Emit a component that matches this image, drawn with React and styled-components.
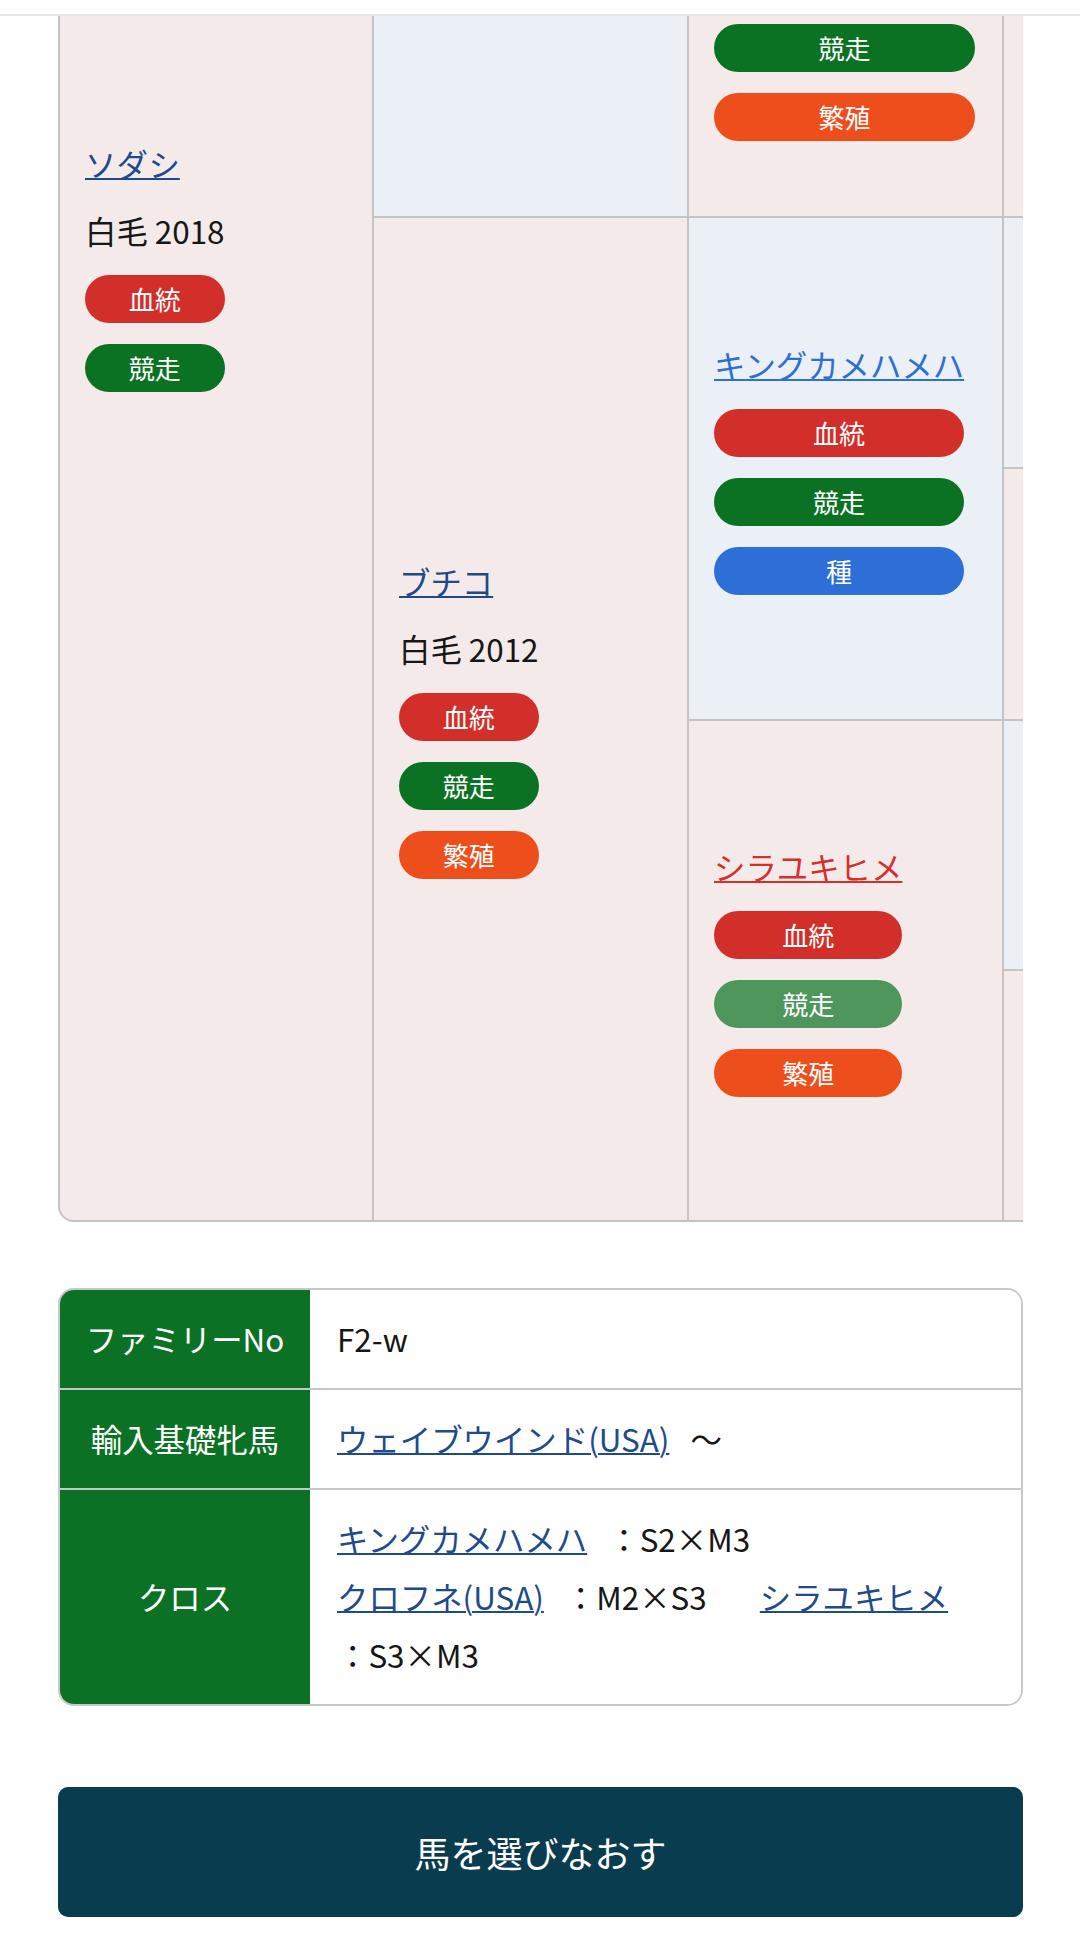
import React from "react";
import styled, { createGlobalStyle } from "styled-components";

const GlobalStyle = createGlobalStyle`
  body {
    margin: 0;
    background: #ffffff;
    font-family: "Noto Sans CJK JP", "Noto Sans", sans-serif;
    color: #161616;
  }
`;

const TONES = {
  sire: "#eaf0f5",
  dam: "#f5eaea",
};

const TAGS = {
  blood: { label: "血統", color: "#d32f2a" },
  race: { label: "競走", color: "#0b7223" },
  raceLight: { label: "競走", color: "#4f965d" },
  breed: { label: "繁殖", color: "#ee4d1c" },
  stud: { label: "種", color: "#2d6fd6" },
};

const NAME_COLORS = {
  normal: "#1d4a8a",
  sire: "#2e6fd2",
  dam: "#d4302d",
};

const cells = [
  {
    col: "1",
    row: "1 / 6",
    tone: "dam",
    padTop: 125,
    horse: { name: "ソダシ", info: "白毛 2018", tags: ["blood", "race"] },
  },
  { col: "2", row: "1 / 2", tone: "sire" },
  {
    col: "2",
    row: "2 / 6",
    tone: "dam",
    horse: { name: "ブチコ", info: "白毛 2012", tags: ["blood", "race", "breed"] },
  },
  {
    col: "3",
    row: "1 / 2",
    tone: "dam",
    padTop: 8,
    horse: { width: 261, tags: ["race", "breed"] },
  },
  {
    col: "3",
    row: "2 / 4",
    tone: "sire",
    horse: { name: "キングカメハメハ", cross: "sire", tags: ["blood", "race", "stud"] },
  },
  {
    col: "3",
    row: "4 / 6",
    tone: "dam",
    horse: { name: "シラユキヒメ", cross: "dam", tags: ["blood", "raceLight", "breed"] },
  },
  { col: "4", row: "1 / 2", tone: "dam" },
  { col: "4", row: "2 / 3", tone: "sire" },
  { col: "4", row: "3 / 4", tone: "dam" },
  { col: "4", row: "4 / 5", tone: "sire" },
  { col: "4", row: "5 / 6", tone: "dam" },
];

const crosses = [
  { name: "キングカメハメハ", ratio: "：S2×M3" },
  { name: "クロフネ(USA)", ratio: "：M2×S3" },
  { name: "シラユキヒメ", ratio: "：S3×M3" },
];

const HorseCard = ({ horse }) => (
  <HorseBlock $width={horse.width}>
    {horse.name && (
      <NameLink href="#" $color={NAME_COLORS[horse.cross || "normal"]}>
        {horse.name}
      </NameLink>
    )}
    {horse.info && <HorseInfo>{horse.info}</HorseInfo>}
    {horse.tags.map((t, i) => (
      <Badge key={i} $color={TAGS[t].color}>
        {TAGS[t].label}
      </Badge>
    ))}
  </HorseBlock>
);

const App = () => {
  return (
    <>
      <GlobalStyle />
      <TopBar />
      <Page>
        <PedigreeScroll>
          <PedigreeGrid>
            {cells.map((c, i) => (
              <Cell
                key={i}
                $col={c.col}
                $row={c.row}
                $tone={c.tone}
                $padTop={c.padTop}
              >
                {c.horse && <HorseCard horse={c.horse} />}
              </Cell>
            ))}
          </PedigreeGrid>
        </PedigreeScroll>

        <InfoTable>
          <InfoRow>
            <InfoLabel>ファミリーNo</InfoLabel>
            <InfoValue>F2-w</InfoValue>
          </InfoRow>
          <InfoRow>
            <InfoLabel>輸入基礎牝馬</InfoLabel>
            <InfoValue>
              <TextLink href="#">ウェイブウインド(USA)</TextLink> 〜
            </InfoValue>
          </InfoRow>
          <InfoRow>
            <InfoLabel>クロス</InfoLabel>
            <InfoValue>
              {crosses.map((c, i) => (
                <React.Fragment key={i}>
                  <CrossItem>
                    <TextLink href="#">{c.name}</TextLink> <Ratio>{c.ratio}</Ratio>
                  </CrossItem>{" "}
                </React.Fragment>
              ))}
            </InfoValue>
          </InfoRow>
        </InfoTable>

        <ReselectButton type="button">馬を選びなおす</ReselectButton>
      </Page>
    </>
  );
};

export default App;

let TopBar = styled.div`
  height: 14px;
  background: #ffffff;
  border-bottom: 2px solid #e6e6e6;
`;

let Page = styled.div`
  padding: 0 57px 33px 58px;
  display: flex;
  flex-direction: column;
`;

let PedigreeScroll = styled.div`
  width: 965px;
  box-sizing: border-box;
  overflow: hidden;
  border-left: 2px solid #c4c4c4;
  border-bottom: 2px solid #c4c4c4;
  border-bottom-left-radius: 16px;
`;

let PedigreeGrid = styled.div`
  display: grid;
  width: max-content;
  grid-template-columns: 312px 313px 313px 313px;
  grid-template-rows: 200px 249px 250px 248px 249px;
  gap: 2px;
  background: #c4c4c4;
`;

let Cell = styled.div`
  grid-column: ${(p) => p.$col};
  grid-row: ${(p) => p.$row};
  background: ${(p) => TONES[p.$tone]};
  padding: ${(p) => (p.$padTop != null ? `${p.$padTop}px` : "0")} 25px 0;
  display: flex;
  flex-direction: column;
  justify-content: ${(p) => (p.$padTop != null ? "flex-start" : "center")};
  align-items: flex-start;
  overflow: hidden;
`;

let HorseBlock = styled.div`
  display: flex;
  flex-direction: column;
  gap: 21px;
  width: ${(p) => (p.$width ? `${p.$width}px` : "max-content")};
`;

let NameLink = styled.a`
  font-size: 31.4px;
  line-height: 46px;
  color: ${(p) => p.$color};
  text-decoration: underline;
  text-decoration-thickness: 2px;
  white-space: nowrap;
`;

let HorseInfo = styled.div`
  font-size: 31.4px;
  line-height: 46px;
  color: #161616;
  white-space: nowrap;
`;

let Badge = styled.div`
  height: 48px;
  border-radius: 24px;
  background: ${(p) => p.$color};
  color: #ffffff;
  font-size: 26px;
  line-height: 48px;
  text-align: center;
`;

let InfoTable = styled.div`
  margin-top: 66px;
  border: 2px solid #c8c8c8;
  border-radius: 16px;
  overflow: hidden;
`;

let InfoRow = styled.div`
  display: grid;
  grid-template-columns: 250px 1fr;
  & + & {
    border-top: 2px solid #c8c8c8;
  }
`;

let InfoLabel = styled.div`
  background: #0b7124;
  color: #ffffff;
  font-size: 31.4px;
  line-height: 58px;
  display: flex;
  align-items: center;
  justify-content: center;
  text-align: center;
`;

let InfoValue = styled.div`
  padding: 20px 27px;
  font-size: 31.4px;
  line-height: 58px;
  color: #161616;
  background: #ffffff;
`;

let TextLink = styled.a`
  color: #1e4b8a;
  text-decoration: underline;
  text-decoration-thickness: 2px;
  white-space: nowrap;
  margin-right: 14px;
`;

let CrossItem = styled.span`
  margin-right: 46px;
`;

let Ratio = styled.span`
  white-space: nowrap;
`;

let ReselectButton = styled.button`
  margin-top: 81px;
  height: 130px;
  width: 100%;
  border: none;
  border-radius: 10px;
  background: #0a3c4f;
  color: #ffffff;
  font-family: "Noto Sans CJK JP", "Noto Sans", sans-serif;
  font-size: 36px;
  cursor: pointer;
`;
